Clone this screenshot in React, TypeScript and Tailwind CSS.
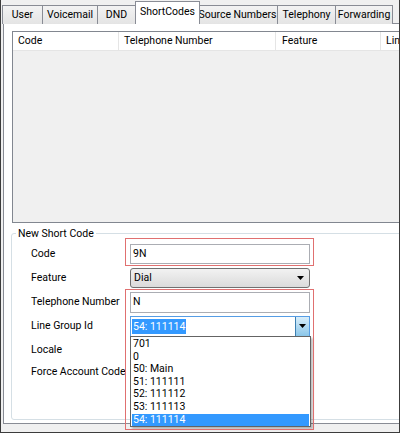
import React from "react";

const tabs = [
  { label: "User", w: "w-[41px]" },
  { label: "Voicemail", w: "w-[56px]" },
  { label: "DND", w: "w-[39px]" },
  { label: "ShortCodes", w: "w-[65px]", active: true },
  { label: "Source Numbers", w: "w-[81px]" },
  { label: "Telephony", w: "w-[59px]" },
  { label: "Forwarding", w: "w-[58px]" },
];

const options = ["701", "0", "50: Main", "51: 111111", "52: 111112", "53: 111113", "54: 111114"];

const Arrow = () => (
  <svg width="7" height="4" viewBox="0 0 7 4">
    <path d="M0 0h7L3.5 4z" fill="#000" />
  </svg>
);

const Row: React.FC<{ label: string; children?: React.ReactNode; h?: string }> = ({
  label,
  children,
  h = "h-[24px]",
}) => (
  <div className={`flex items-center ${h}`}>
    <span className="w-[99px] shrink-0 whitespace-nowrap">{label}</span>
    {children}
  </div>
);

export default function App() {
  return (
    <div
      className="relative w-[400px] h-[433px] overflow-hidden bg-[#f0f0f0] border-l border-r border-b border-[#3c3c3c] text-[10.5px] text-black whitespace-nowrap"
      style={{ fontFamily: "Roboto, 'Liberation Sans', sans-serif" }}
    >
      {/* tab strip */}
      <div className="flex items-end h-[24px] pl-[2px]">
        {tabs.map((t) =>
          t.active ? (
            <div
              key={t.label}
              className={`${t.w} h-[23px] -ml-px -mr-[2px] relative z-10 shrink-0 bg-white border border-b-0 border-[#898c95] flex items-center justify-center pb-[2px]`}
            >
              {t.label}
            </div>
          ) : (
            <div
              key={t.label}
              className={`${t.w} h-[19px] -ml-px shrink-0 bg-gradient-to-b from-[#f3f3f3] to-[#e4e4e4] border border-b-0 border-[#898c95] flex items-center justify-center`}
            >
              {t.label}
            </div>
          )
        )}
      </div>

      {/* tab page */}
      <div className="ml-[2px] -mt-px w-[420px] h-[401px] bg-white border border-[#898c95]">
        {/* list view */}
        <div className="ml-[8px] mt-[7px] w-[420px] h-[192px] border border-[#828790] bg-[#f0f0f0] flex flex-col">
          <div className="flex h-[19px] bg-white border-b border-[#e5e5e5] shrink-0">
            <div className="w-[106px] border-r border-[#e5e5e5] pl-[5px] flex items-center">Code</div>
            <div className="w-[157px] border-r border-[#e5e5e5] pl-[5px] flex items-center">Telephone Number</div>
            <div className="w-[105px] border-r border-[#e5e5e5] pl-[6px] flex items-center">Feature</div>
            <div className="w-[20px] pl-[5px] flex items-center overflow-hidden">Lin</div>
          </div>
        </div>

        {/* group box */}
        <fieldset className="ml-[7px] mt-[4px] w-[420px] h-[193px] border border-[#d5dfe5] rounded-[3px]">
          <legend className="ml-[4px] px-[2px] leading-[13px]">New Short Code</legend>
          <div className="flex flex-col pl-[19px] pt-[2px]">
            <Row label="Code">
              <div className="w-[180px] h-[20px] border border-[#abadb3] bg-white pl-[2px] flex items-center">9N</div>
            </Row>
            <Row label="Feature">
              <div className="w-[180px] h-[20px] border border-[#707070] rounded-[3px] bg-gradient-to-b from-[#f2f2f2] to-[#dbdbdb] pl-[3px] pr-[5px] flex items-center justify-between">
                <span>Dial</span>
                <Arrow />
              </div>
            </Row>
            <Row label="Telephone Number">
              <div className="w-[180px] h-[21px] border border-[#abadb3] bg-white pl-[2px] flex items-center">N</div>
            </Row>
            <Row label="Line Group Id">
              <div className="w-[180px] h-[21px] border border-[#569de5] bg-white pl-[1px] flex items-center justify-between">
                <span className="bg-[#3399ff] text-white px-[1px] leading-[15px]">54: 111114</span>
                <div className="w-[14px] h-[19px] border-l border-[#3c7fb1] bg-gradient-to-b from-[#d9eefa] to-[#8ac6e9] flex items-center justify-center">
                  <Arrow />
                </div>
              </div>
            </Row>
            <Row label="Locale" h="h-[24px]" />
            <Row label="Force Account Code" h="h-[20px]" />
          </div>
        </fieldset>
      </div>

      {/* dropdown list */}
      <div className="absolute left-[129px] top-[336px] w-[181px] h-[91px] bg-white border border-[#646464] shadow-[2px_2px_2px_rgba(0,0,0,0.25)] pt-[1px] px-[1px]">
        {options.map((o, i) => (
          <div
            key={o}
            className={`h-[12.6px] leading-[12.6px] pl-[1px] ${i === options.length - 1 ? "bg-[#3399ff] text-white" : ""}`}
          >
            {o}
          </div>
        ))}
      </div>

      {/* annotation boxes */}
      <div className="absolute left-[124px] top-[238px] w-[189px] h-[28px] border border-[#e07070] pointer-events-none" />
      <div className="absolute left-[124px] top-[289px] w-[189px] h-[141px] border border-[#e07070] pointer-events-none" />
    </div>
  );
}
